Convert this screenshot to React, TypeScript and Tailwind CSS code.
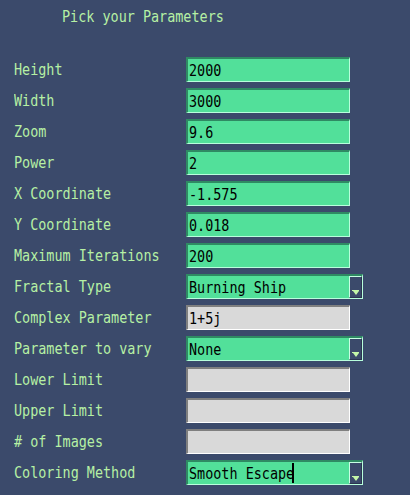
import React from 'react';

type Field = {
    label: string;
    value: string;
    kind: 'entry' | 'blank' | 'combo';
    cursor?: boolean;
};

const fields: Field[] = [
    { label: 'Height', value: '2000', kind: 'entry' },
    { label: 'Width', value: '3000', kind: 'entry' },
    { label: 'Zoom', value: '9.6', kind: 'entry' },
    { label: 'Power', value: '2', kind: 'entry' },
    { label: 'X Coordinate', value: '-1.575', kind: 'entry' },
    { label: 'Y Coordinate', value: '0.018', kind: 'entry' },
    { label: 'Maximum Iterations', value: '200', kind: 'entry' },
    { label: 'Fractal Type', value: 'Burning Ship', kind: 'combo' },
    { label: 'Complex Parameter', value: '1+5j', kind: 'blank' },
    { label: 'Parameter to vary', value: 'None', kind: 'combo' },
    { label: 'Lower Limit', value: '', kind: 'blank' },
    { label: 'Upper Limit', value: '', kind: 'blank' },
    { label: '# of Images', value: '', kind: 'blank' },
    { label: 'Coloring Method', value: 'Smooth Escape', kind: 'combo', cursor: true },
];

// the original font is a narrow mono, so squeeze DejaVu a bit
function Narrow({ children }: { children: React.ReactNode }) {
    return <span className="inline-block origin-left scale-x-[0.84] whitespace-pre">{children}</span>;
}

function Entry({ value, grey }: { value: string; grey?: boolean }) {
    return (
        <div
            className={`w-[164px] h-[25px] flex items-center pl-[1px] pt-[1px] border border-l-[2px] border-t-[2px] ${grey
                ? 'bg-[#d9d9d9] border-l-[#7f7f7f] border-t-[#7f7f7f] border-r-white border-b-white'
                : 'bg-[#52e09a] border-l-[#2f8a63] border-t-[#2f8a63] border-r-[#b8ffdc] border-b-[#b8ffdc]'
                }`}
        >
            <span className="text-black">
                <Narrow>{value}</Narrow>
            </span>
        </div>
    );
}

function Combo({ value, cursor }: { value: string; cursor?: boolean }) {
    return (
        <div className="w-[177px] h-[25px] flex bg-[#52e09a] border border-l-[2px] border-t-[2px] border-l-[#2f8a63] border-t-[#2f8a63] border-r-[#b8ffdc] border-b-[#b8ffdc]">
            <div className="flex-1 flex items-center pl-[1px] pt-[1px] relative">
                <span className="text-black">
                    <Narrow>{value}</Narrow>
                </span>
                {cursor && <span className="absolute left-[104px] top-[1px] w-[1.5px] h-[20px] bg-black" />}
            </div>
            <div className="w-[13px] bg-[#3b4a6b] border-l border-t border-l-[#c8ffe4] border-t-[#c8ffe4] border-r border-b border-r-[#2a3550] border-b-[#2a3550] flex items-end justify-center pb-[2px]">
                <div className="flex flex-col items-center">
                    <div className="w-[7px] h-[1px] bg-[#c4f7a8]" />
                    <div className="w-0 h-0 border-l-[3.5px] border-r-[3.5px] border-t-[4px] border-l-transparent border-r-transparent border-t-[#c4f7a8]" />
                </div>
            </div>
        </div>
    );
}

export default function App() {
    return (
        <div
            className="w-[410px] h-[495px] bg-[#3b4a6b] text-[#b6f0a4] text-[16px] overflow-hidden"
            style={{ fontFamily: '"DejaVu Sans Mono", monospace' }}
        >
            <div className="pl-[62px] pt-[6px] h-[57px] leading-[22px]">
                <Narrow>Pick your Parameters</Narrow>
            </div>
            <div className="flex flex-col gap-[6px] pl-[14px]">
                {fields.map((f) => (
                    <div key={f.label} className="flex items-center h-[25px]">
                        <div className="w-[172px] pt-[1px]">
                            <Narrow>{f.label}</Narrow>
                        </div>
                        {f.kind === 'combo' ? (
                            <Combo value={f.value} cursor={f.cursor} />
                        ) : (
                            <Entry value={f.value} grey={f.kind === 'blank'} />
                        )}
                    </div>
                ))}
            </div>
        </div>
    );
}
